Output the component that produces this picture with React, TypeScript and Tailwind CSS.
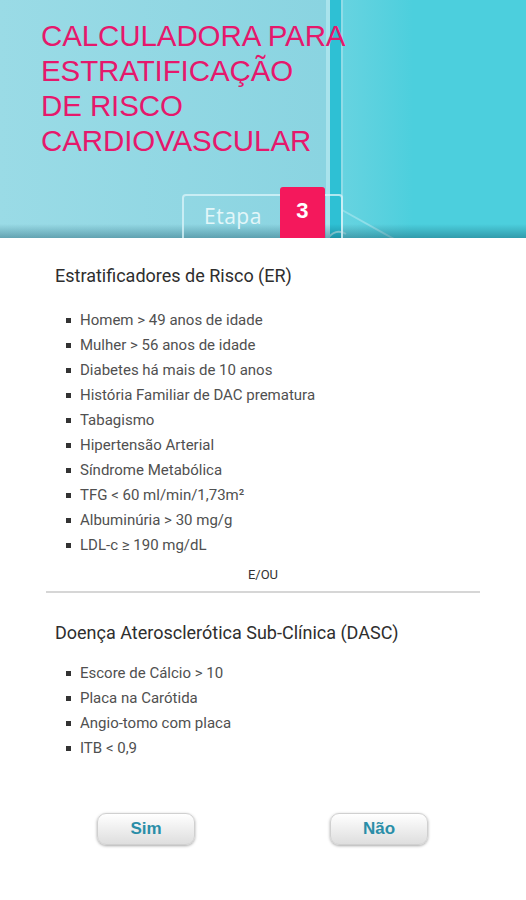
import React from "react";

const er = [
  "Homem > 49 anos de idade",
  "Mulher > 56 anos de idade",
  "Diabetes há mais de 10 anos",
  "História Familiar de DAC prematura",
  "Tabagismo",
  "Hipertensão Arterial",
  "Síndrome Metabólica",
  "TFG < 60 ml/min/1,73m²",
  "Albuminúria > 30 mg/g",
  "LDL-c ≥ 190 mg/dL",
];

const dasc = [
  "Escore de Cálcio > 10",
  "Placa na Carótida",
  "Angio-tomo com placa",
  "ITB < 0,9",
];

function Item({ text }: { text: string }) {
  return (
    <li className="flex items-center h-[25px] text-[15px] text-[#505050]">
      <span className="w-[5px] h-[5px] bg-[#333] mr-[9px] ml-[11px] shrink-0" />
      <span>{text}</span>
    </li>
  );
}

function Btn({ label }: { label: string }) {
  return (
    <button
      className="w-[98px] h-[32px] rounded-[9px] bg-gradient-to-b from-[#ffffff] to-[#dedede] shadow-[0_1px_3px_rgba(0,0,0,0.35)] border border-[#d0d0d0] text-[#2a8ea8] font-bold text-[17px]"
      style={{ fontFamily: "'Liberation Sans', Arial, sans-serif" }}
    >
      {label}
    </button>
  );
}

export default function App() {
  return (
    <div
      className="w-[526px] h-[900px] bg-white overflow-hidden"
      style={{ fontFamily: "Roboto, 'Noto Sans', sans-serif" }}
    >
      {/* Header */}
      <div className="relative h-[238px] overflow-hidden">
        {/* background drawing */}
        <div className="absolute inset-0 flex">
          <div className="w-[326px] bg-gradient-to-r from-[#9adbe6] to-[#8ad4e1]" />
          <div className="w-[4px] bg-[#a9e3ec]" />
          <div className="w-[11px] bg-[#2ec0d4]" />
          <div className="w-[2px] bg-[#8fdce7]" />
          <div className="w-[70px] bg-gradient-to-r from-[#66d3e0] to-[#4ccfdd]" />
          <div className="flex-1 bg-[#4ccfdd]" />
        </div>
        <svg className="absolute left-[300px] top-[190px]" width="120" height="48" viewBox="0 0 120 48">
          <path d="M42 20 L110 58" stroke="#8fdfe9" strokeWidth="2" fill="none" />
          <path d="M28 48 Q36 38 46 44" stroke="#9fe3ec" strokeWidth="2" fill="none" />
        </svg>
        <div className="absolute left-0 right-0 bottom-0 h-[14px] bg-gradient-to-b from-transparent to-[rgba(0,60,80,0.35)]" />

        <div className="relative flex flex-col h-full">
          <div
            className="pl-[41px] pt-[18px] text-[#e5186c] text-[29.5px] leading-[35px] tracking-[-0.1px]"
            style={{ fontFamily: "'Liberation Sans', Arial, sans-serif" }}
          >
            <div>CALCULADORA PARA</div>
            <div>ESTRATIFICAÇÃO</div>
            <div>DE RISCO</div>
            <div>CARDIOVASCULAR</div>
          </div>

          <div className="mt-auto ml-[182px] w-[161px] h-[44px] border-2 border-b-0 border-[rgba(220,245,250,0.75)] rounded-t-[4px] flex items-start">
            <div
              className="ml-[20px] mt-[5px] text-[21px] text-[#e3f6f9] tracking-[0.5px]"
              style={{ fontFamily: "'Open Sans', sans-serif" }}
            >
              Etapa
            </div>
            <div
              className="ml-[18px] -mt-[9px] w-[45px] h-[53px] rounded-t-[3px] bg-[#f4185c] flex justify-center pt-[10px] text-white font-bold text-[22px] leading-[28px]"
              style={{ fontFamily: "'Liberation Sans', Arial, sans-serif" }}
            >
              3
            </div>
          </div>
        </div>
      </div>

      {/* Content */}
      <div className="px-[46px]">
        <h2 className="ml-[9px] mt-[26px] text-[18px] leading-[24px] text-[#2e2e2e]">
          Estratificadores de Risco (ER)
        </h2>
        <ul className="mt-[20px] ml-[9px]">
          {er.map((t) => (
            <Item key={t} text={t} />
          ))}
        </ul>
        <div className="text-center text-[13px] leading-[20px] text-[#333] mt-[7px]">E/OU</div>
        <div className="h-[2px] bg-[#d6d6d6] mt-[6px]" />
        <h2 className="ml-[9px] mt-[28px] text-[18px] leading-[24px] text-[#2e2e2e]">
          Doença Aterosclerótica Sub-Clínica (DASC)
        </h2>
        <ul className="mt-[16px] ml-[9px]">
          {dasc.map((t) => (
            <Item key={t} text={t} />
          ))}
        </ul>
      </div>

      <div className="flex pl-[97px] gap-[135px] mt-[52px]">
        <Btn label="Sim" />
        <Btn label="Não" />
      </div>
    </div>
  );
}
